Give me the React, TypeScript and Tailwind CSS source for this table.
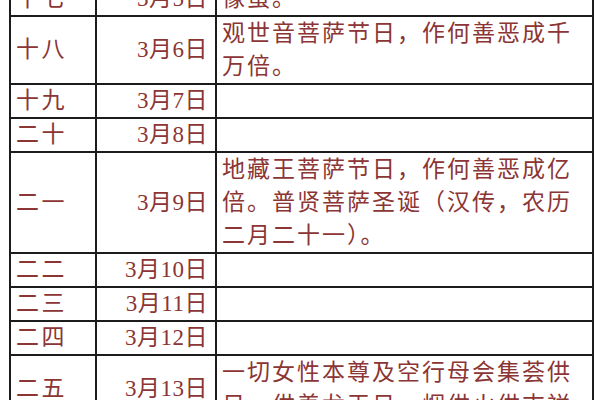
import React from "react";

type Row = { day: string; date: string; lines: string[]; h: string };

const rows: Row[] = [
  { day: "十七", date: "3月5日", lines: ["像蛋。"], h: "h-[34px]" },
  { day: "十八", date: "3月6日", lines: ["观世音菩萨节日，作何善恶成千", "万倍。"], h: "h-[68px]" },
  { day: "十九", date: "3月7日", lines: [], h: "h-[34px]" },
  { day: "二十", date: "3月8日", lines: [], h: "h-[33px]" },
  {
    day: "二一",
    date: "3月9日",
    lines: ["地藏王菩萨节日，作何善恶成亿", "倍。普贤菩萨圣诞（汉传，农历", "二月二十一）。"],
    h: "h-[101px]",
  },
  { day: "二二", date: "3月10日", lines: [], h: "h-[33px]" },
  { day: "二三", date: "3月11日", lines: [], h: "h-[34px]" },
  { day: "二四", date: "3月12日", lines: [], h: "h-[34px]" },
  {
    day: "二五",
    date: "3月13日",
    lines: ["一切女性本尊及空行母会集荟供", "日，供养龙王日，烟供火供吉祥"],
    h: "h-[68px]",
  },
];

export default function App() {
  return (
    <div className="w-[600px] h-[400px] overflow-hidden bg-white">
      <table
        className="ml-[9px] mt-[-20px] w-[585px] table-fixed border-collapse text-[23px] text-[#8b3535]"
        style={{ fontFamily: '"Liberation Serif", "Noto Sans CJK SC", serif' }}
      >
        <colgroup>
          <col className="w-[86px]" />
          <col className="w-[120px]" />
          <col />
        </colgroup>
        <tbody>
          {rows.map((r) => (
            <tr key={r.day} className={r.h}>
              <td className="border-2 border-[#1c1c1c] p-0 pl-[5px] align-middle leading-[32px] tracking-[2.5px] whitespace-nowrap">
                {r.day}
              </td>
              <td className="border-2 border-[#1c1c1c] p-0 pr-[7px] text-right align-middle leading-[32px] tracking-[0.5px] whitespace-nowrap">
                {r.date}
              </td>
              <td className="border-2 border-[#1c1c1c] p-0 pl-[5px] align-middle leading-[33px] tracking-[2px]">
                {r.lines.map((l, i) => (
                  <div key={i} className="whitespace-nowrap">
                    {l}
                  </div>
                ))}
              </td>
            </tr>
          ))}
        </tbody>
      </table>
    </div>
  );
}
